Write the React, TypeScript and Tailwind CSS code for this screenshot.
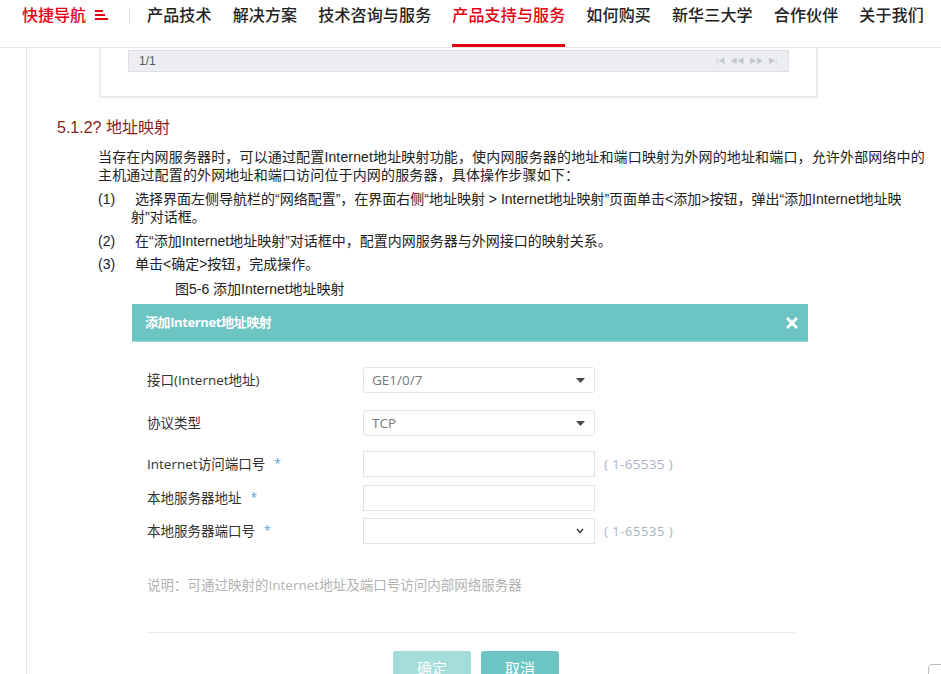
import React from "react";

const FONT = { fontFamily: '"Liberation Sans", "Noto Sans CJK SC", Arial, sans-serif' };
const DFONT = { fontFamily: '"Open Sans", "Noto Sans CJK SC", Arial, sans-serif' };

function Hamburger() {
  return (
    <svg width="14" height="10" viewBox="0 0 14 10" className="block">
      <rect x="0" y="0" width="8" height="2" fill="#e60012" />
      <rect x="0" y="4" width="10" height="2" fill="#e60012" />
      <rect x="0" y="8" width="13" height="2" fill="#e60012" />
    </svg>
  );
}

function Caret() {
  return (
    <svg width="9" height="5" viewBox="0 0 9 5" className="block">
      <polygon points="0,0 9,0 4.5,5" fill="#4a4a4a" />
    </svg>
  );
}

function Chevron() {
  return (
    <svg width="8" height="6" viewBox="0 0 8 6" className="block">
      <polyline points="1,1 4,4.5 7,1" fill="none" stroke="#444" strokeWidth="1.6" />
    </svg>
  );
}

function Star() {
  return <span className="ml-[9px] text-[12px] text-[#4f9fdc]">*</span>;
}

export default function App() {
  const nav = ["产品技术", "解决方案", "技术咨询与服务", "产品支持与服务", "如何购买", "新华三大学", "合作伙伴", "关于我们"];
  return (
    <div className="relative w-[941px] h-[674px] overflow-hidden bg-white text-[#333]" style={FONT}>
      {/* header */}
      <div className="h-[48px] border-b border-[#e6e6e6] flex items-start">
        <div className="ml-[22px] flex items-center h-[32px]">
          <span className="text-[16px] leading-[22px] text-[#e60012] font-medium">快捷导航</span>
          <span className="ml-[9px] -mt-[2px]"><Hamburger /></span>
          <span className="ml-[20px] w-px h-[16px] bg-[#d9d9d9]" />
        </div>
        <div className="ml-[17px] flex items-start gap-[21px]">
          {nav.map((n, i) => (
            <div key={n} className={"h-[47px] flex flex-col " + (i === 3 ? "border-b-[3px] border-[#e60012]" : "")}>
              <span className={"pt-[5px] text-[16px] leading-[22px] font-medium tracking-[0.15px] " + (i === 3 ? "text-[#e60012]" : "text-[#222]")}>{n}</span>
            </div>
          ))}
        </div>
      </div>

      {/* body */}
      <div className="ml-[26px] border-l border-[#e3e3e3] h-[626px]">
        {/* table remnant */}
        <div className="ml-[72px] w-[719px] border-x-2 border-b-2 border-[#ebebeb] pt-[2px] pb-[24px] pl-[27px]">
          <div className="w-[661px] h-[22px] bg-[#eceef1] border border-[#dcdfe3] flex items-center justify-between px-[10px]">
            <span className="text-[12px] text-[#555]">1/1</span>
            <span className="text-[7px] text-[#c4c8cc] flex gap-[5px] mr-[1px]">
              <span>|◀</span><span>◀◀</span><span>▶▶</span><span>▶|</span>
            </span>
          </div>
        </div>

        <div className="ml-[30px] mt-[21px] text-[16px] leading-[18px] text-[#8a1c1c]">5.1.2? 地址映射</div>

        <div className="ml-[71px] mt-[11px] text-[14px] leading-[18px] text-[#222] whitespace-nowrap">
          <div className="tracking-[0.15px]">当存在内网服务器时，可以通过配置Internet地址映射功能，使内网服务器的地址和端口映射为外网的地址和端口，允许外部网络中的</div>
          <div className="tracking-[0.15px]">主机通过配置的外网地址和端口访问位于内网的服务器，具体操作步骤如下：</div>

          <div className="mt-[6px] flex">
            <span className="w-[33px]">(1)</span>
            <div>
              <div className="pl-[4px]">选择界面左侧导航栏的“网络配置”，在界面右侧“地址映射 &gt; Internet地址映射”页面单击&lt;添加&gt;按钮，弹出“添加Internet地址映</div>
              <div>射”对话框。</div>
            </div>
          </div>
          <div className="mt-[6px] flex">
            <span className="w-[33px]">(2)</span>
            <div className="pl-[4px]">在“添加Internet地址映射”对话框中，配置内网服务器与外网接口的映射关系。</div>
          </div>
          <div className="mt-[5px] flex">
            <span className="w-[33px]">(3)</span>
            <div className="pl-[4px]">单击&lt;确定&gt;按钮，完成操作。</div>
          </div>
          <div className="mt-[7px] ml-[77px] text-[14px]">图5-6 添加Internet地址映射</div>
        </div>

        {/* dialog screenshot */}
        <div className="ml-[105px] mt-[6px] w-[676px]" style={DFONT}>
          <div className="h-[38px] bg-[#6cc5c3] border-b border-[#9ad8d6] flex items-center justify-between pl-[13px] pr-[8px]">
            <span className="text-[13px] font-bold text-white tracking-[-0.4px]">添加Internet地址映射</span>
            <svg width="14" height="14" viewBox="0 0 14 14" className="block mr-[1px]">
              <path d="M2 2 L12 12 M12 2 L2 12" stroke="#fff" strokeWidth="3" strokeLinecap="butt" />
            </svg>
          </div>

          <div className="pl-[15px] pr-[13px] text-[13.5px]">
            <div className="mt-[25px] flex items-center h-[26px]">
              <span className="w-[216px] text-[#333]">接口(Internet地址)</span>
              <div className="w-[232px] h-[26px] border border-[#e2e2e2] rounded-[3px] flex items-center justify-between pl-[8px] pr-[9px] text-[#777]">
                <span>GE1/0/7</span><Caret />
              </div>
            </div>
            <div className="mt-[17px] flex items-center h-[26px]">
              <span className="w-[216px] text-[#333]">协议类型</span>
              <div className="w-[232px] h-[26px] border border-[#e2e2e2] rounded-[3px] flex items-center justify-between pl-[8px] pr-[9px] text-[#777]">
                <span>TCP</span><Caret />
              </div>
            </div>
            <div className="mt-[15px] flex items-center h-[26px]">
              <span className="w-[216px] text-[#333] flex items-center">Internet访问端口号<Star /></span>
              <div className="w-[232px] h-[26px] border border-[#e2e2e2]" />
              <span className="ml-[9px] text-[#a9b4c6] tracking-[0.3px]">( 1-65535 )</span>
            </div>
            <div className="mt-[8px] flex items-center h-[26px]">
              <span className="w-[216px] text-[#333] flex items-center">本地服务器地址<Star /></span>
              <div className="w-[232px] h-[26px] border border-[#e2e2e2]" />
            </div>
            <div className="mt-[7px] flex items-center h-[26px]">
              <span className="w-[216px] text-[#333] flex items-center">本地服务器端口号<Star /></span>
              <div className="w-[232px] h-[26px] border border-[#e2e2e2] flex items-center justify-end pr-[10px]">
                <Chevron />
              </div>
              <span className="ml-[9px] text-[#a9b4c6] tracking-[0.3px]">( 1-65535 )</span>
            </div>

            <div className="mt-[31px] text-[#b3b3b3]">说明：可通过映射的Internet地址及端口号访问内部网络服务器</div>

            <div className="mt-[37px] h-px bg-[#ebebeb]" />

            <div className="mt-[18px] ml-[246px] flex gap-[10px]">
              <div className="w-[78px] h-[30px] rounded-[3px] bg-[#a4dcd9] text-white text-[15px] flex items-start pt-[6px] justify-center">确定</div>
              <div className="w-[78px] h-[30px] rounded-[3px] bg-[#6cc5c3] text-white text-[15px] flex items-start pt-[6px] justify-center">取消</div>
            </div>
          </div>
        </div>
      </div>

      {/* floating widget edge */}
      <div className="absolute left-[928px] top-[664px] w-[30px] h-[30px] rounded-[4px] border border-[#bbb] bg-white" />
    </div>
  );
}
